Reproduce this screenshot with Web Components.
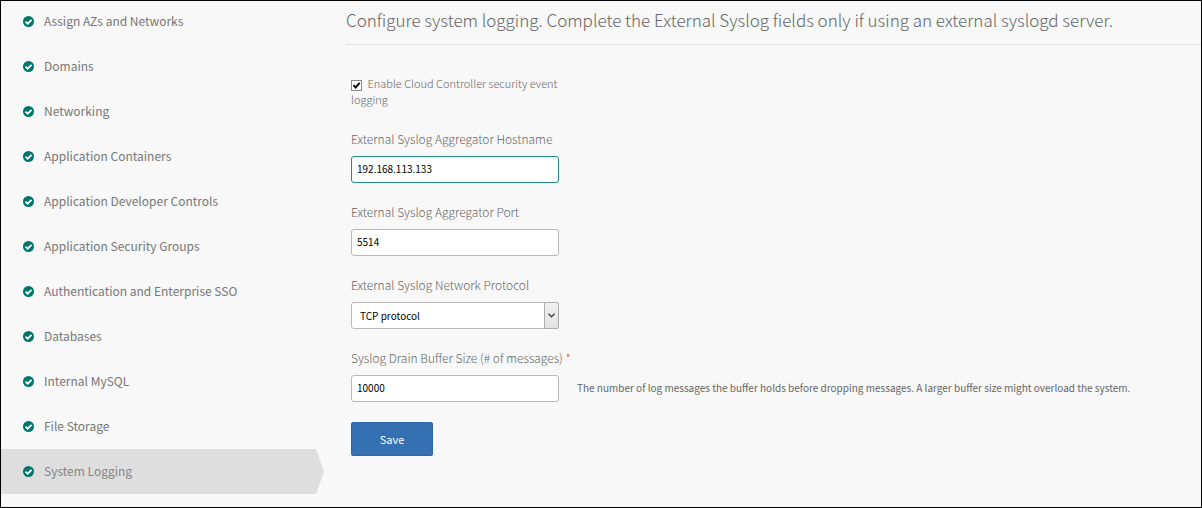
<!DOCTYPE html>
<html lang="en">
<head>
<meta charset="utf-8">
<title>System Logging</title>
<style>
  body { margin: 0; background: #f8f8f8; color: #666; font-family: "Noto Sans CJK SC", "Noto Sans", sans-serif; }
</style>
</head>
<body>
<settings-shell>
  <step-nav slot="nav">
    <step-item>Assign AZs and Networks</step-item>
    <step-item>Domains</step-item>
    <step-item>Networking</step-item>
    <step-item>Application Containers</step-item>
    <step-item>Application Developer Controls</step-item>
    <step-item>Application Security Groups</step-item>
    <step-item>Authentication and Enterprise SSO</step-item>
    <step-item>Databases</step-item>
    <step-item>Internal MySQL</step-item>
    <step-item>File Storage</step-item>
    <step-item active>System Logging</step-item>
  </step-nav>
  <page-title>Configure system logging. Complete the External Syslog fields only if using an external syslogd server.</page-title>
  <settings-form>
    <check-field>Enable Cloud Controller security event logging</check-field>
    <text-field label="External Syslog Aggregator Hostname" value="192.168.113.133" highlighted></text-field>
    <text-field label="External Syslog Aggregator Port" value="5514"></text-field>
    <select-field label="External Syslog Network Protocol" options="TCP protocol|UDP protocol"></select-field>
    <text-field label="Syslog Drain Buffer Size (# of messages)" value="10000" required>The number of log messages the buffer holds before dropping messages. A larger buffer size might overload the system.</text-field>
    <save-button>Save</save-button>
  </settings-form>
</settings-shell>

<script>
const define = (name, render) => customElements.define(name, class extends HTMLElement {
  constructor() {
    super();
    this.attachShadow({ mode: 'open' });
  }
  connectedCallback() {
    this.shadowRoot.innerHTML = render(this);
  }
});

const fieldStyles = `
  :host { display: block; }
  label { display: block; font-size: 12px; font-weight: 300; line-height: 18px; margin-bottom: 8px; }
  .row { display: flex; align-items: center; gap: 18px; }
  input, select {
    box-sizing: border-box; width: 208px; height: 27px; margin: 0; padding: 0 5px 2px;
    border: 1px solid #b8b8b8; border-radius: 3px; background: #fff; color: #000;
    font-family: inherit; font-size: 10px; outline: 0;
  }`;

define('settings-shell', () => `
  <style>
    :host { display: flex; box-sizing: border-box; min-height: 100vh; border: 1px solid #000; overflow: hidden; }
    main { flex: 1; min-width: 0; margin-left: 22px; }
  </style>
  <slot name="nav"></slot>
  <main><slot></slot></main>`);

define('step-nav', () => `
  <style>
    :host { display: block; flex: 0 0 323px; margin-top: -2px; }
  </style>
  <nav aria-label="Settings"><slot></slot></nav>`);

define('step-item', el => `
  <style>
    :host { display: block; }
    a {
      display: flex; align-items: center; gap: 10px; height: 45px; padding-left: 22px;
      color: #777; text-decoration: none; font-size: 12px; font-weight: 400; line-height: 16px;
    }
    :host([active]) a {
      background: #dedede; color: #868686;
      clip-path: polygon(0 0, calc(100% - 8px) 0, 100% 50%, calc(100% - 8px) 100%, 0 100%);
    }
    span { padding-bottom: 2px; }
    svg { flex: none; width: 11px; height: 11px; }
  </style>
  <a href="#"${el.hasAttribute('active') ? ' aria-current="page"' : ''}>
    <svg viewBox="0 0 12 12" aria-hidden="true">
      <circle cx="6" cy="6" r="6" fill="#00756c"/>
      <path d="M2.8 6.2 5.1 8.4 9.3 4.2" fill="none" stroke="#fff" stroke-width="1.9"/>
    </svg>
    <span><slot></slot></span>
  </a>`);

define('page-title', () => `
  <style>
    :host { display: block; border-bottom: 1px solid #e6e6e6; }
    h1 { margin: 0; padding: 7px 0 12px; font-size: 17px; font-weight: 300; line-height: 24px; }
  </style>
  <h1><slot></slot></h1>`);

define('settings-form', () => `
  <style>
    form { display: flex; flex-direction: column; align-items: flex-start; gap: 20px; padding: 30px 5px 0; }
  </style>
  <form><slot></slot></form>`);

define('check-field', () => `
  <style>
    :host { display: block; width: 208px; padding-bottom: 3px; }
    label { display: block; font-size: 11px; font-weight: 300; line-height: 16px; }
    .box { position: relative; display: inline-block; width: 11px; height: 11px; margin-right: 3px; vertical-align: -3px; }
    input { appearance: none; box-sizing: border-box; display: block; width: 11px; height: 11px; margin: 0; border: 1px solid #8a8a8a; background: #fff; }
    svg { position: absolute; inset: 0; display: none; pointer-events: none; }
    input:checked + svg { display: block; }
  </style>
  <label><span class="box"><input type="checkbox" checked><svg width="11" height="11" viewBox="0 0 11 11" aria-hidden="true"><path d="M2.5 5.2 4.6 7.6 8.6 2.8" fill="none" stroke="#000" stroke-width="1.9"/></svg></span>
  <slot></slot></label>`);

define('text-field', el => `
  <style>${fieldStyles}
    :host([highlighted]) input { border-color: #1f8d82; }
    .required { color: #f4433b; }
    .hint { color: #666; font-size: 10px; line-height: 16px; padding-bottom: 2px; }
  </style>
  <label for="control">${el.getAttribute('label')}${el.hasAttribute('required') ? ' <span class="required">*</span>' : ''}</label>
  <div class="row">
    <input id="control" type="text" value="${el.getAttribute('value')}"${el.hasAttribute('required') ? ' required' : ''}>
    <span class="hint"><slot></slot></span>
  </div>`);

define('select-field', el => `
  <style>${fieldStyles}
    .select { position: relative; width: 208px; height: 27px; }
    select { appearance: none; display: block; padding: 0 24px 0 8px; }
    .arrow {
      position: absolute; top: 0; right: 0; bottom: 0; box-sizing: border-box; width: 15px;
      display: flex; align-items: center; justify-content: center; pointer-events: none;
      border: 1px solid #acacac; border-radius: 0 2px 2px 0; background: linear-gradient(#f0f0f0, #e2e2e2);
    }
  </style>
  <label for="control">${el.getAttribute('label')}</label>
  <div class="select">
    <select id="control">${el.getAttribute('options').split('|').map(o => `<option>${o}</option>`).join('')}</select>
    <span class="arrow"><svg width="7" height="5" viewBox="0 0 7 5" aria-hidden="true"><path d="M.5.7 3.5 3.7 6.5.7" fill="none" stroke="#444" stroke-width="1.4"/></svg></span>
  </div>`);

define('save-button', () => `
  <style>
    button {
      display: block; width: 82px; height: 34px; padding: 0; border: 1px solid #2e65a3; border-radius: 2px;
      background: #3570b3; color: #fff; font-family: inherit; font-size: 11px; font-weight: 400; line-height: 16px;
    }
  </style>
  <button type="button"><slot></slot></button>`);
</script>
</body>
</html>
